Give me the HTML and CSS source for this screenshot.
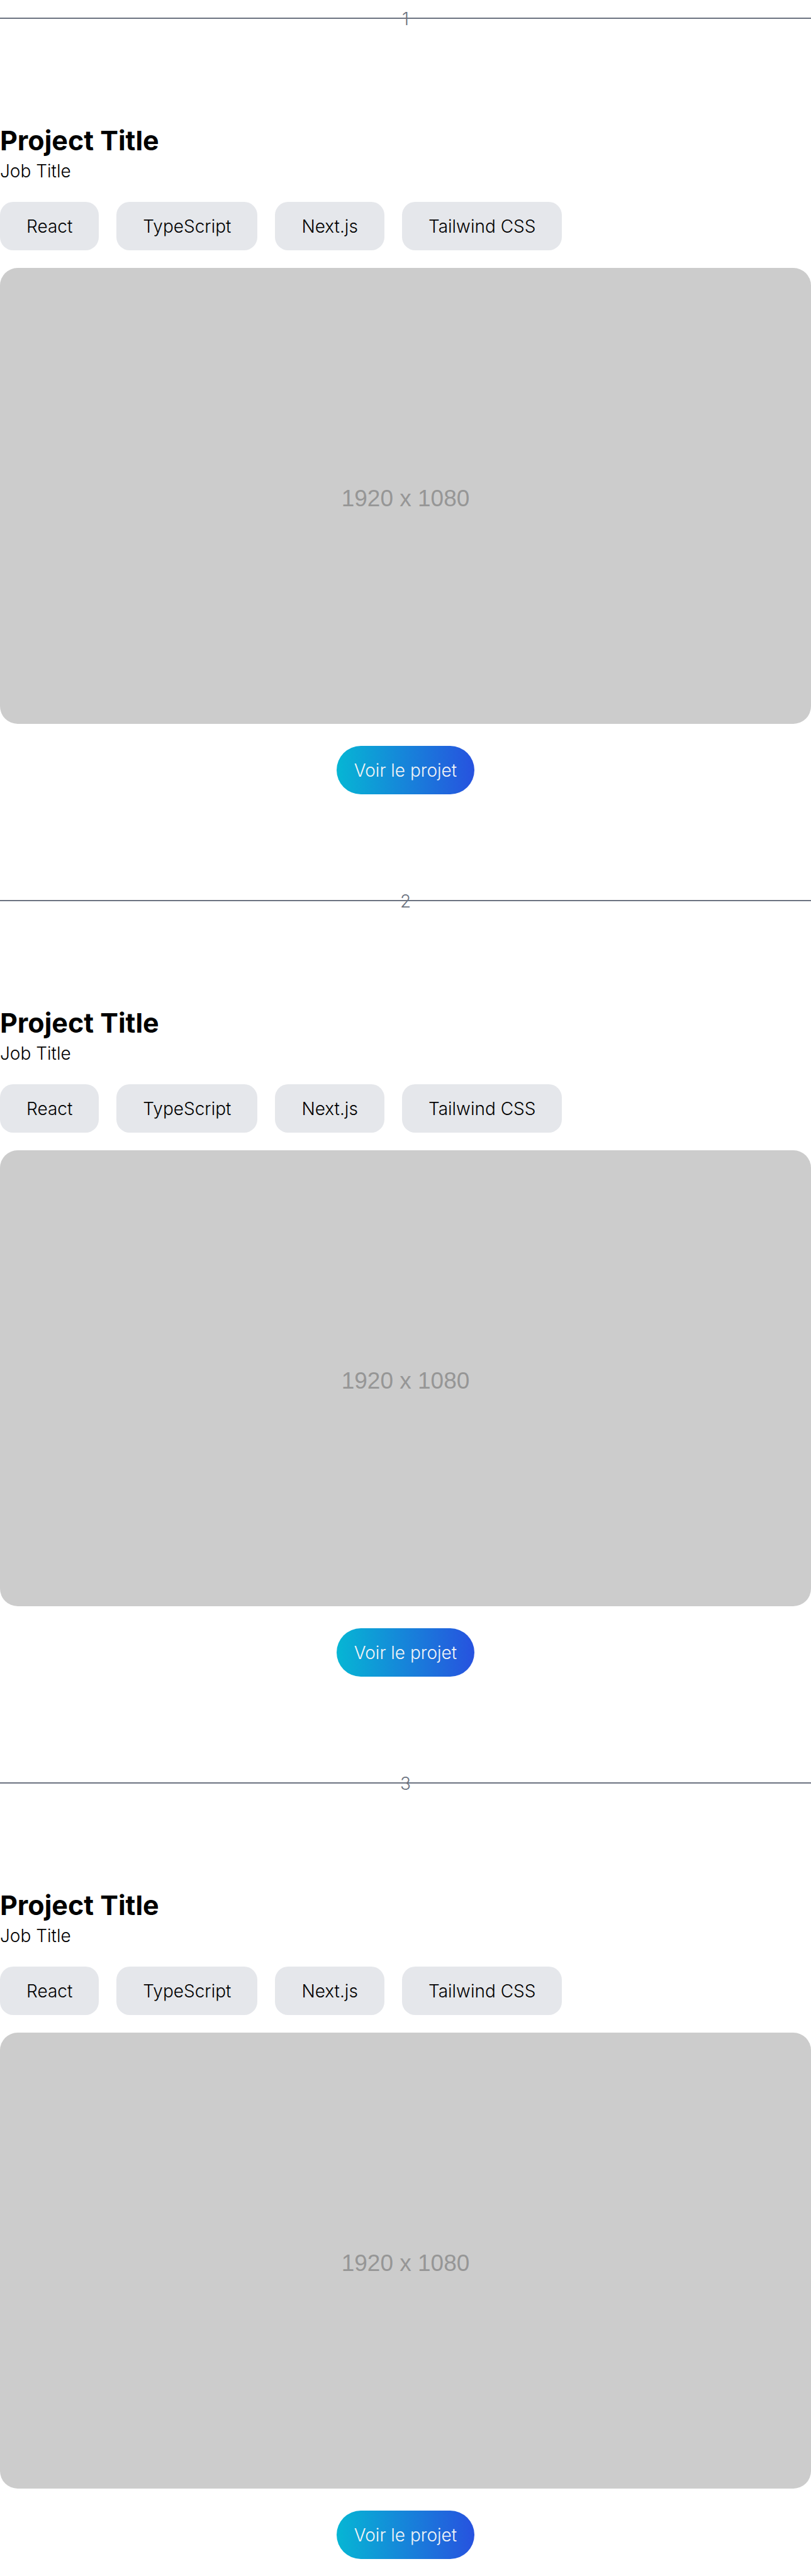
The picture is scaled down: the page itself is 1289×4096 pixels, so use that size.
FILE: index.html
```html
<!DOCTYPE html>
<html lang="fr">
<head>
<meta charset="utf-8">
<meta name="viewport" content="width=device-width, initial-scale=1">
<title>Projets</title>
<link rel="stylesheet" href="styles.css">
</head>
<body>
<main class="projects">
  <section class="project">
    <div class="marker"><hr class="marker-rule"><span class="marker-number">1</span></div>
    <header class="project-header">
      <h2 class="project-title">Project Title</h2>
      <p class="project-job">Job Title</p>
    </header>
    <ul class="tags">
      <li class="tag">React</li>
      <li class="tag">TypeScript</li>
      <li class="tag">Next.js</li>
      <li class="tag">Tailwind CSS</li>
    </ul>
    <div class="preview">1920 x 1080</div>
    <a class="project-link" href="#">Voir le projet</a>
  </section>
  <section class="project">
    <div class="marker"><hr class="marker-rule"><span class="marker-number">2</span></div>
    <header class="project-header">
      <h2 class="project-title">Project Title</h2>
      <p class="project-job">Job Title</p>
    </header>
    <ul class="tags">
      <li class="tag">React</li>
      <li class="tag">TypeScript</li>
      <li class="tag">Next.js</li>
      <li class="tag">Tailwind CSS</li>
    </ul>
    <div class="preview">1920 x 1080</div>
    <a class="project-link" href="#">Voir le projet</a>
  </section>
  <section class="project">
    <div class="marker"><hr class="marker-rule"><span class="marker-number">3</span></div>
    <header class="project-header">
      <h2 class="project-title">Project Title</h2>
      <p class="project-job">Job Title</p>
    </header>
    <ul class="tags">
      <li class="tag">React</li>
      <li class="tag">TypeScript</li>
      <li class="tag">Next.js</li>
      <li class="tag">Tailwind CSS</li>
    </ul>
    <div class="preview">1920 x 1080</div>
    <a class="project-link" href="#">Voir le projet</a>
  </section>
</main>
</body>
</html>
```
FILE: styles.css
```css
*,
*::before,
*::after {
  box-sizing: border-box;
}

body {
  margin: 0;
  background: #fff;
  color: #000;
  font-family: Inter, "Liberation Sans", sans-serif;
  font-size: 28px;
  font-weight: 300;
  line-height: 42px;
}

.projects {
  display: flex;
  flex-direction: column;
  gap: 149px;
  padding: 9px 0 24px;
}

.project {
  display: flex;
  flex-direction: column;
}

/* The section number sits on top of its divider. */
.marker {
  display: grid;
  justify-items: center;
  margin-bottom: 144px;
  color: #6b7280;
}

.marker-rule,
.marker-number {
  grid-area: 1 / 1;
}

.marker-rule {
  width: 100%;
  margin: 19px 0 0;
  border: 0;
  border-top: 2px solid #6b7280;
}

.project-title {
  margin: 0;
  font-size: 43px;
  font-weight: 700;
  line-height: 56px;
}

.project-job {
  margin: 0;
}

.tags {
  display: flex;
  flex-wrap: wrap;
  gap: 28px;
  margin: 28px 0;
  padding: 0;
  list-style: none;
}

.tag,
.project-link {
  display: flex;
  align-items: center;
  min-height: 77px;
}

.tag {
  padding: 0 42px;
  border-radius: 21px;
  background: #e5e7eb;
}

.preview {
  display: flex;
  align-items: center;
  justify-content: center;
  aspect-ratio: 16 / 9;
  padding-top: 8px;
  border-radius: 28px;
  background: #ccc;
  color: #969696;
  font-family: "Liberation Sans", Arial, sans-serif;
  font-size: 37px;
  font-weight: 400;
}

.project-link {
  align-self: center;
  margin-top: 35px;
  padding: 0 28px;
  border-radius: 39px;
  background: linear-gradient(to right, #06b6d4, #2752df);
  color: #f3f4f6;
  text-decoration: none;
}
```
